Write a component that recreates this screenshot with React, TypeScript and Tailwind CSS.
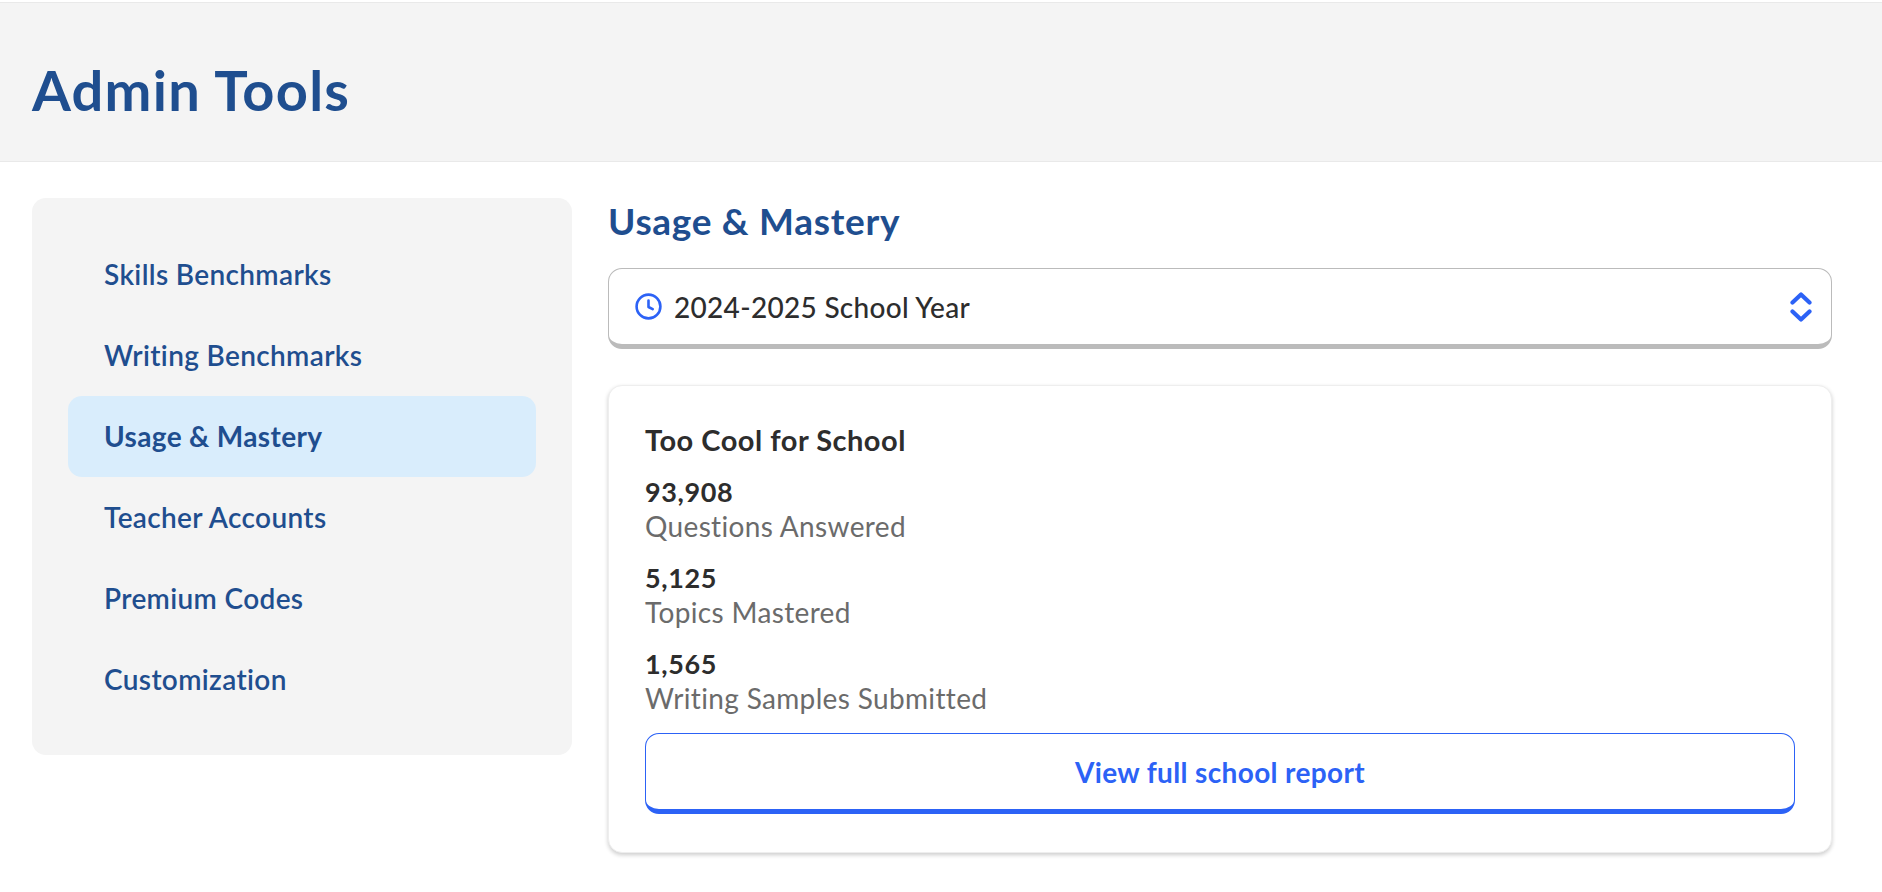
const font = "font-['Lato','Noto_Sans',sans-serif]";

function Clock() {
  return (
    <svg width="27" height="27" viewBox="0 0 27 27" fill="none" stroke="#2c62f6" strokeWidth="2.6" strokeLinecap="round" strokeLinejoin="round" className="shrink-0">
      <circle cx="13.5" cy="13.5" r="11.9" />
      <path d="M13.5 7.5v6.5l4.2 2.2" />
    </svg>
  );
}

function Chevrons() {
  return (
    <svg width="22" height="30" viewBox="0 0 22 30" fill="none" stroke="#2c62f6" strokeWidth="4.2" strokeLinecap="round" strokeLinejoin="round" className="shrink-0">
      <path d="M2.5 10.5 11 2.5l8.5 8" />
      <path d="M2.5 19.5 11 27.5l8.5-8" />
    </svg>
  );
}

const nav = ["Skills Benchmarks", "Writing Benchmarks", "Usage & Mastery", "Teacher Accounts", "Premium Codes", "Customization"];
const stats = [
  ["93,908", "Questions Answered"],
  ["5,125", "Topics Mastered"],
  ["1,565", "Writing Samples Submitted"],
];

export default function App() {
  return (
    <div className={`${font} min-h-[892px] bg-white`}>
      <header className="mt-[2px] flex h-[160px] items-center border-y border-[#e9e9e9] bg-[#f4f4f4] px-8 pt-[16px]">
        <h1 className="text-[56px] leading-none font-bold tracking-[1.25px] text-[#1f4e8f]">Admin Tools</h1>
      </header>
      <div className="flex items-start gap-9 px-8 pt-9 pr-[50px]">
        <nav className="flex w-[540px] shrink-0 flex-col rounded-[14px] bg-[#f4f4f4] px-9 pt-9 pb-[35px]">
          {nav.map((n) => (
            <a
              key={n}
              className={`flex h-[81px] items-center rounded-[14px] pb-[2px] pl-9 text-[28px] tracking-[0.35px] text-[#1f4e8f] ${n === "Usage & Mastery" ? "bg-[#d9edfc] font-bold" : "font-semibold"}`}
            >
              {n}
            </a>
          ))}
        </nav>
        <main className="flex min-w-0 flex-1 flex-col">
          <h2 className="h-[47px] text-[37px] leading-[46px] font-bold tracking-[0.7px] text-[#1f4e8f]">Usage &amp; Mastery</h2>
          <div className="mt-[23px] flex h-[81px] items-center gap-[12px] rounded-[14px] border border-b-[5px] border-[#bbbbbb] bg-white pr-[19px] pl-[26px]">
            <Clock />
            <span className="flex-1 text-[28px] font-medium tracking-[0.3px] text-[#2d2d2d]">2024-2025 School Year</span>
            <Chevrons />
          </div>
          <section className="mt-[36px] flex flex-col rounded-[14px] border border-[#eeeeee] bg-white px-9 pt-9 pb-[38px] shadow-[0_2px_4px_rgba(0,0,0,0.2)]">
            <h3 className="text-[29px] leading-9 font-bold tracking-[0.5px] text-[#2d2d2d]">Too Cool for School</h3>
            <div className="mt-[16px] flex flex-col gap-[16px]">
              {stats.map(([v, l]) => (
                <div key={l} className="flex flex-col">
                  <span className="text-[27px] leading-[35px] font-bold tracking-[0.6px] text-[#2d2d2d]">{v}</span>
                  <span className="text-[28px] leading-[35px] tracking-[0.35px] text-[#6b6b6b]">{l}</span>
                </div>
              ))}
            </div>
            <button className="mt-[17px] flex h-[81px] items-center justify-center rounded-[14px] border border-b-[5px] border-[#2c62f6] bg-white text-[28px] font-bold tracking-[0.36px] text-[#2c62f6]">
              View full school report
            </button>
          </section>
        </main>
      </div>
    </div>
  );
}
